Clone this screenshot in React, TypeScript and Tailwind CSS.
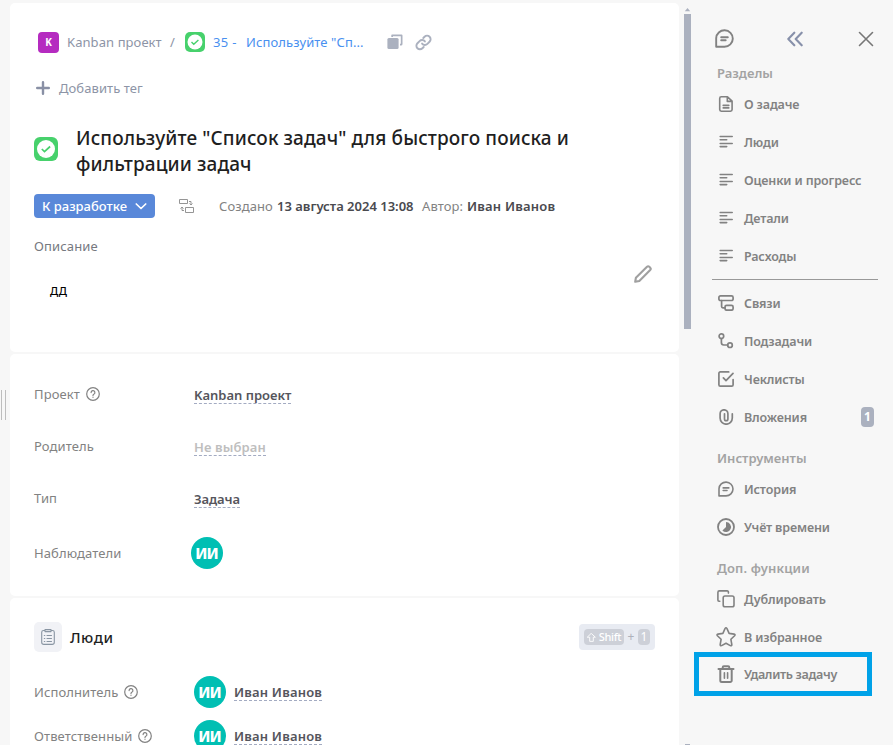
import type { ReactNode } from "react";

type IconProps = { className?: string };

const stroke = {
  fill: "none",
  stroke: "currentColor",
  strokeLinecap: "round" as const,
  strokeLinejoin: "round" as const,
};

const Message = ({ className = "size-4" }: IconProps) => (
  <svg viewBox="0 0 16 16" className={className} {...stroke} strokeWidth="1.6">
    <path d="M1 14.900V7.700A7 6.900 0 1 1 8 14.900ZM5.200 6.900h5.600M5.200 9.500h3.800" />
  </svg>
);
const FileDoc = () => (
  <svg viewBox="0 0 16 16" className="size-4" {...stroke} strokeWidth="1.6">
    <path d="M9.500.8H3.300a1.600 1.600 0 0 0-1.600 1.600v11.200a1.600 1.600 0 0 0 1.600 1.600h9.200a1.600 1.600 0 0 0 1.600-1.600V5.200ZM9.300 1v4.400H14M5.200 9.400h5.600M5.200 11.900h5.600" />
  </svg>
);
const Lines = () => (
  <svg viewBox="0 0 16 16" className="size-4" {...stroke} strokeWidth="1.6">
    <path d="M2.200 2.500h12M2.200 5.700h6.500M2.200 9.500h12M2.200 12.600h6.500" />
  </svg>
);
const Relations = () => (
  <svg viewBox="0 0 16 16" className="size-4" {...stroke} strokeWidth="1.7">
    <rect x=".9" y=".9" width="14.2" height="4.600" rx="1.600" />
    <rect x="7" y="10.400" width="8.100" height="4.800" rx="1.600" />
    <path d="M3.600 5.500v6.100q0 1.300 1.300 1.300H7" />
  </svg>
);
const Subtasks = () => (
  <svg viewBox="0 0 16 16" className="size-4" {...stroke} strokeWidth="1.7">
    <circle cx="3.400" cy="3.200" r="2.300" />
    <circle cx="12" cy="12.200" r="2.300" />
    <path d="M3.400 5.600v4q0 2.400 2.400 2.400h3.800" />
  </svg>
);
const Checklist = () => (
  <svg viewBox="0 0 16 16" className="size-4" {...stroke} strokeWidth="1.700">
    <path d="M10.700.9H2.300A1.400 1.400 0 0 0 .9 2.300v11.400a1.400 1.400 0 0 0 1.400 1.400h11.400a1.400 1.400 0 0 0 1.400-1.400V8.500M5.400 6.900 8 9.700l7-7.400" />
  </svg>
);
const Clip = () => (
  <svg viewBox="0 0 16 16" className="size-4" {...stroke} strokeWidth="1.700">
    <path d="M14.300 4.800v4.300a6.100 6.100 0 0 1-12.200 0V4.700a3.900 3.900 0 0 1 7.800 0V10a1.700 1.700 0 0 1-3.400 0V4.800" />
  </svg>
);
const TimeTrack = () => (
  <svg viewBox="0 0 18 18" className="size-[18px]" {...stroke} strokeWidth="1.800">
    <circle cx="9" cy="9" r="8" />
    <path d="M9 4a5 5 0 1 1-3.600 8.500L9 9Z" fill="currentColor" stroke="none" />
  </svg>
);
const Duplicate = () => (
  <svg viewBox="0 0 18 18" className="size-[18px]" {...stroke} strokeWidth="1.600">
    <rect x="6.200" y="6" width="10.800" height="10.800" rx="1.800" />
    <path d="M2.800 11.200H2A1.200 1.200 0 0 1 .9 10V2.400A1.500 1.500 0 0 1 2.400.9H10a1.200 1.200 0 0 1 1.400 1.200v1" />
  </svg>
);
const Star = () => (
  <svg viewBox="0 0 20 20" className="size-5 shrink-0" {...stroke} strokeWidth="1.600">
    <path d="M9 1.600q1-1.600 2 0l2.100 4.800 5 .7q1.600.4.5 1.600l-3.700 3.600.9 5.200q.1 1.700-1.500 1.100L10 16.200l-4.400 2.400q-1.600.5-1.400-1.100l.9-5.200-3.700-3.600q-1-1.300.5-1.600l5-.7Z" />
  </svg>
);
const Trash = () => (
  <svg viewBox="0 0 18 18" className="size-[18px]" {...stroke} strokeWidth="2">
    <path d="M1.500 3.900h15M5.700 3.500V2.400a1.200 1.200 0 0 1 1.200-1.200h4.200a1.200 1.200 0 0 1 1.200 1.200v1.100M3.300 4.200v11.300a1.500 1.500 0 0 0 1.500 1.500h8.400a1.500 1.500 0 0 0 1.500-1.500V4.200" />
    <path d="M7.400 7.700v5.600M10.600 7.700v5.600" strokeWidth="1.600" />
  </svg>
);
const Help = () => (
  <svg viewBox="0 0 14 14" className="size-[14px]" {...stroke} strokeWidth="1.200">
    <circle cx="7" cy="7" r="6.300" />
    <path d="M5.100 5.600a1.900 1.900 0 1 1 2.700 1.700q-.8.4-.8 1.100M7 10.200v.1" />
  </svg>
);
const TaskMark = ({ className }: IconProps) => (
  <svg viewBox="0 0 24 24" className={className}>
    <rect width="24" height="24" rx="6" fill="#47d16c" />
    <circle cx="12" cy="12" r="9" fill="#fff" />
    <path d="m7.800 12 2.700 2.600 5.600-5.100" fill="none" stroke="#47d16c" strokeWidth="1.700" />
  </svg>
);

const Avatar = () => (
  <span className="flex size-8 shrink-0 items-center justify-center rounded-full bg-[#00bfb3] text-[15.5px] font-extrabold text-white">
    <span className="mr-px -tracking-[1px]">ИИ</span>
  </span>
);

const Value = ({ children, className = "" }: { children: ReactNode; className?: string }) => (
  <span className={`border-b border-dashed border-[#a3abc2] leading-[15px] font-semibold whitespace-nowrap ${className}`}>
    {children}
  </span>
);

const Label = ({ children, help }: { children: ReactNode; help?: boolean }) => (
  <div className="flex w-40 shrink-0 items-center gap-[6px] tracking-[0.1px] text-[#828282]">
    <span>{children}</span>
    {help && <Help />}
  </div>
);

const Item = ({ icon, label, badge, mark, tight = "-tracking-[0.14px]", className = "h-[38px]" }: {
  icon: ReactNode;
  label: ReactNode;
  badge?: string;
  mark?: boolean;
  tight?: string;
  className?: string;
}) => (
  <div className={`relative flex items-center pr-[19px] pl-[22px] ${className}`}>
    {mark && <div className="absolute -top-[3px] left-[2px] h-11 w-[178px] border-[5px] border-[#00a2e8]" />}
    <span className="flex w-6 shrink-0 justify-center text-[#828282]">{icon}</span>
    <span className={`mt-[2px] ml-[6px] text-[12.5px] font-semibold whitespace-nowrap ${tight}`}>{label}</span>
    {badge && (
      <span className="ml-auto flex h-5 w-[13px] items-center justify-center rounded-[4px] bg-[#abb1bf] text-[12px] font-bold text-white">
        {badge}
      </span>
    )}
  </div>
);

const Heading = ({ children, className = "" }: { children: ReactNode; className?: string }) => (
  <div className={`flex items-center pl-[25px] font-semibold text-[#a3a3a3] ${className}`}>{children}</div>
);

export default function App() {
  return (
    <div className="flex h-[745px] w-[893px] overflow-hidden bg-[#f7f7f7] font-['Noto_Sans','Open_Sans',sans-serif] text-[13px] leading-5">
      <div className="flex w-[10px] shrink-0 gap-[3px] pt-[390px] pl-px">
        <i className="h-[30px] w-px bg-[#bdbdbd]" />
        <i className="h-[30px] w-px bg-[#bdbdbd]" />
      </div>

      <main className="flex w-[669px] shrink-0 flex-col gap-[2px] pt-[3px]">
        <section className="h-[349px] shrink-0 rounded-[5px] bg-white px-6 pt-7">
          <div className="flex h-[22px] items-center pl-1 text-[#8d94a6]">
            <span className="flex size-[21px] items-center justify-center rounded-[4px] bg-[#b52bc0] text-[10px] font-bold text-white">K</span>
            <span className="ml-2 w-[95px] tracking-[0.08px] whitespace-nowrap">Kanban проект</span>
            <span className="ml-[8px] w-[6px]">/</span>
            <TaskMark className="ml-[9px] size-5" />
            <span className="ml-2 w-[25px] tracking-[0.3px] whitespace-nowrap text-[#4990f0]">35 -</span>
            <span className="ml-2 w-[119px] tracking-[0.1px] whitespace-nowrap text-[#4990f0]">Используйте "Сп...</span>
            <svg viewBox="0 0 16 16" className="ml-[22px] size-4" fill="#abb1bf">
              <path d="M5 .5h9.500a1 1 0 0 1 1 1V10q0 1.500-1.500 1.500h-1V9.700h.8V2.200H6v.9H4.300V1.200Q4.300.5 5 .5Z" />
              <rect x=".4" y="4" width="11.200" height="11" rx="1.500" />
            </svg>
            <svg viewBox="0 0 24 24" className="ml-3 size-[17px] text-[#abb1bf]" {...stroke} strokeWidth="2.700">
              <path d="M10 13.500a5 5 0 0 0 7.500.5l3-3a5 5 0 0 0-7-7.200l-1.800 1.800" />
              <path d="M14 10.500a5 5 0 0 0-7.500-.5l-3 3a5 5 0 0 0 7 7.200l1.800-1.800" />
            </svg>
          </div>

          <div className="mt-6 flex h-[22px] items-center gap-[9px] pl-[2px] text-[#8d94a6]">
            <svg viewBox="0 0 14 14" className="size-[14px] text-[#8990a5]" {...stroke} strokeWidth="2.400">
              <path d="M7 1.200v11.600M1.200 7h11.600" />
            </svg>
            <span className="tracking-[0.08px]">Добавить тег</span>
          </div>

          <div className="mt-[26px] flex h-[52px]">
            <TaskMark className="mt-3 size-6" />
            <h1 className="ml-[18px] text-[19px] leading-[26px] font-medium tracking-[0.1px] whitespace-nowrap text-[#1f1f1f]">
              Используйте "Список задач" для быстрого поиска и<br />фильтрации задач
            </h1>
          </div>

          <div className="mt-[17px] flex h-6 items-center whitespace-nowrap text-[#828282]">
            <button className="flex h-6 w-[121px] items-center justify-between rounded-[4px] bg-[#5988d9] px-2 font-medium text-white">
              <span>К разработке</span>
              <svg viewBox="0 0 12 8" className="h-2 w-3" {...stroke} strokeWidth="1.700"><path d="m1.300 2 4.700 4.500L10.700 2" /></svg>
            </button>
            <svg viewBox="0 0 16 16" className="ml-6 size-4 text-[#959595]" fill="none" stroke="currentColor" strokeWidth="1">
              <path d="M.5 1.500h8v4h-8ZM6.500 9.500h8v5h-8ZM10 3.500h2v3.500M10.500 5.500 12 7l1.500-1.500M5 12.500H3V9M1.500 10.500 3 9l1.500 1.500" />
            </svg>
            <span className="ml-[24px] w-[54px] tracking-[0.1px]">Создано</span>
            <span className="ml-1 w-[137px] font-semibold text-[#4a4a4f]">13 августа 2024 13:08</span>
            <span className="ml-2 w-[41px] tracking-[0.1px]">Автор:</span>
            <span className="ml-1 font-semibold tracking-[0.2px] text-[#4a4a4f]">Иван Иванов</span>
          </div>

          <div className="mt-[18px] tracking-[0.15px] text-[#76797f]">Описание</div>
          <div className="mt-[10px] flex h-10 items-start pl-4 text-black">
            <span className="mt-[14px] text-[13.5px] tracking-[0.2px]">дд</span>
            <svg viewBox="0 0 18 18" className="-mt-px mr-[3px] ml-auto size-[18px] text-[#a0a0a0]" {...stroke} strokeWidth="2.100">
              <path d="m1.200 16.800.7-4.100L13 1.800q1.100-1.100 2.300 0l.9.900q1.100 1.100 0 2.300L5.300 16Z" />
            </svg>
          </div>
        </section>

        <section className="h-[242px] shrink-0 rounded-[5px] bg-white px-6 pt-[14px]">
          <div className="flex h-[52px] items-center"><Label help>Проект</Label><Value className="mt-[3px] text-[#55555c]">Kanban проект</Value></div>
          <div className="flex h-[52px] items-center"><Label>Родитель</Label><Value className="mt-[3px] tracking-[0.1px] text-[#bebebe]">Не выбран</Value></div>
          <div className="flex h-[52px] items-center"><Label>Тип</Label><Value className="mt-[3px] -tracking-[0.1px] text-[#55555c]">Задача</Value></div>
          <div className="mt-px flex h-[56px] items-center"><Label>Наблюдатели</Label><div className="-ml-[3px]"><Avatar /></div></div>
        </section>

        <section className="h-[200px] shrink-0 rounded-[5px] bg-white px-6 pt-6">
          <div className="mb-[18px] flex h-[30px] items-center">
            <span className="flex h-[30px] w-7 items-center justify-center rounded-[5px] bg-[#f1f2f6]">
              <svg viewBox="0 0 16 16" className="size-4 text-[#8995a2]" {...stroke} strokeWidth="1.100">
                <path d="M5 1.500H3.500q-1.800 0-1.800 1.800v9.900q0 2.200 2.200 2.200h8.200q2.200 0 2.200-2.200V3.300q0-1.800-1.800-1.800h-1.500M5 .6h6v2H5ZM4.300 6.500h.5M7 6.500h4.500M4.300 9.500h.5M7 9.500h4.500M4.300 12.500h.5M7 12.500h4.500" />
              </svg>
            </span>
            <h2 className="ml-2 text-[15px] font-medium tracking-[0.5px] text-[#1f1f1f]">Люди</h2>
            <div className="ml-auto flex h-[26px] w-[76px] items-center justify-between rounded-[4px] bg-[#e8ebf2] px-[5px] text-[12px] text-[#aeb1bb]">
              <span className="flex h-4 w-10 items-center justify-center gap-[3px] rounded-[4px] bg-[#cdd0d8] text-[11px] font-medium text-white">
                <svg viewBox="0 0 10 10" className="size-[9px]" {...stroke} strokeWidth="1"><path d="m5 .7 4.300 4H7v4.600H3V4.700H.7Z" /></svg>
                <span className="-tracking-[0.35px]">Shift</span>
              </span>
              <span>+</span>
              <span className="flex h-4 w-3 items-center justify-center rounded-[4px] bg-[#cdd0d8] text-[12px] text-white">1</span>
            </div>
          </div>
          <div className="flex h-11 items-center"><Label help>Исполнитель</Label><Avatar /><Value className="mt-px ml-2 tracking-[0.18px] text-[#55555c]">Иван Иванов</Value></div>
          <div className="flex h-11 items-center"><Label help>Ответственный</Label><Avatar /><Value className="mt-px ml-2 tracking-[0.18px] text-[#55555c]">Иван Иванов</Value></div>
        </section>
      </main>

      <div className="flex w-[13px] shrink-0 flex-col pl-[5px]">
        <svg viewBox="0 0 7 6" className="mt-2 h-[6px] w-[7px]" fill="#abb1bf"><path d="M.800 3.200 3.500 0l2.700 3.200Z" /></svg>
        <div className="h-[315px] w-[7px] bg-[#abb1bf]" />
        <div className="mt-auto ml-px h-px w-[5px] bg-[#abb1bf]" />
      </div>

      <aside className="w-[201px] shrink-0 text-[#828282]">
        <div className="flex h-[61px] items-center pt-[16px] pl-[23px]">
          <Message className="size-[19px]" />
          <svg viewBox="0 0 16 16" className="ml-[53px] size-4 text-[#8790aa]" {...stroke} strokeWidth="2.100"><path d="M7.300 1.700 1.300 8l6 6.300M14.700 1.700 8.700 8l6 6.300" /></svg>
          <svg viewBox="0 0 16 16" className="ml-[55px] size-4 text-[#777]" {...stroke} strokeWidth="1.600"><path d="m1.500 1.500 13 13M14.500 1.500l-13 13" /></svg>
        </div>
        <Heading className="mb-px h-[23px]">Разделы</Heading>
        <Item icon={<FileDoc />} label="О задаче" />
        <Item icon={<Lines />} label="Люди" />
        <Item icon={<Lines />} label="Оценки и прогресс" />
        <Item icon={<Lines />} label="Детали" />
        <Item icon={<Lines />} label="Расходы" />
        <div className="mt-[4px] mr-[15px] mb-[4px] ml-5 h-px bg-[#999]" />
        <Item icon={<Relations />} label="Связи" />
        <Item icon={<Subtasks />} label="Подзадачи" />
        <Item icon={<Checklist />} label="Чеклисты" />
        <Item icon={<Clip />} label="Вложения" badge="1" />
        <Heading className="mt-[10px] h-6">Инструменты</Heading>
        <Item icon={<Message />} label="История" />
        <Item icon={<TimeTrack />} label="Учёт времени" />
        <Heading className="mt-[10px] h-6 tracking-[0.15px]">Доп. функции</Heading>
        <Item icon={<Duplicate />} label="Дублировать" />
        <Item icon={<Star />} label="В избранное" className="h-[37px]" />
        <Item icon={<Trash />} label="Удалить задачу" tight="-tracking-[0.32px]" mark />
      </aside>
    </div>
  );
}
